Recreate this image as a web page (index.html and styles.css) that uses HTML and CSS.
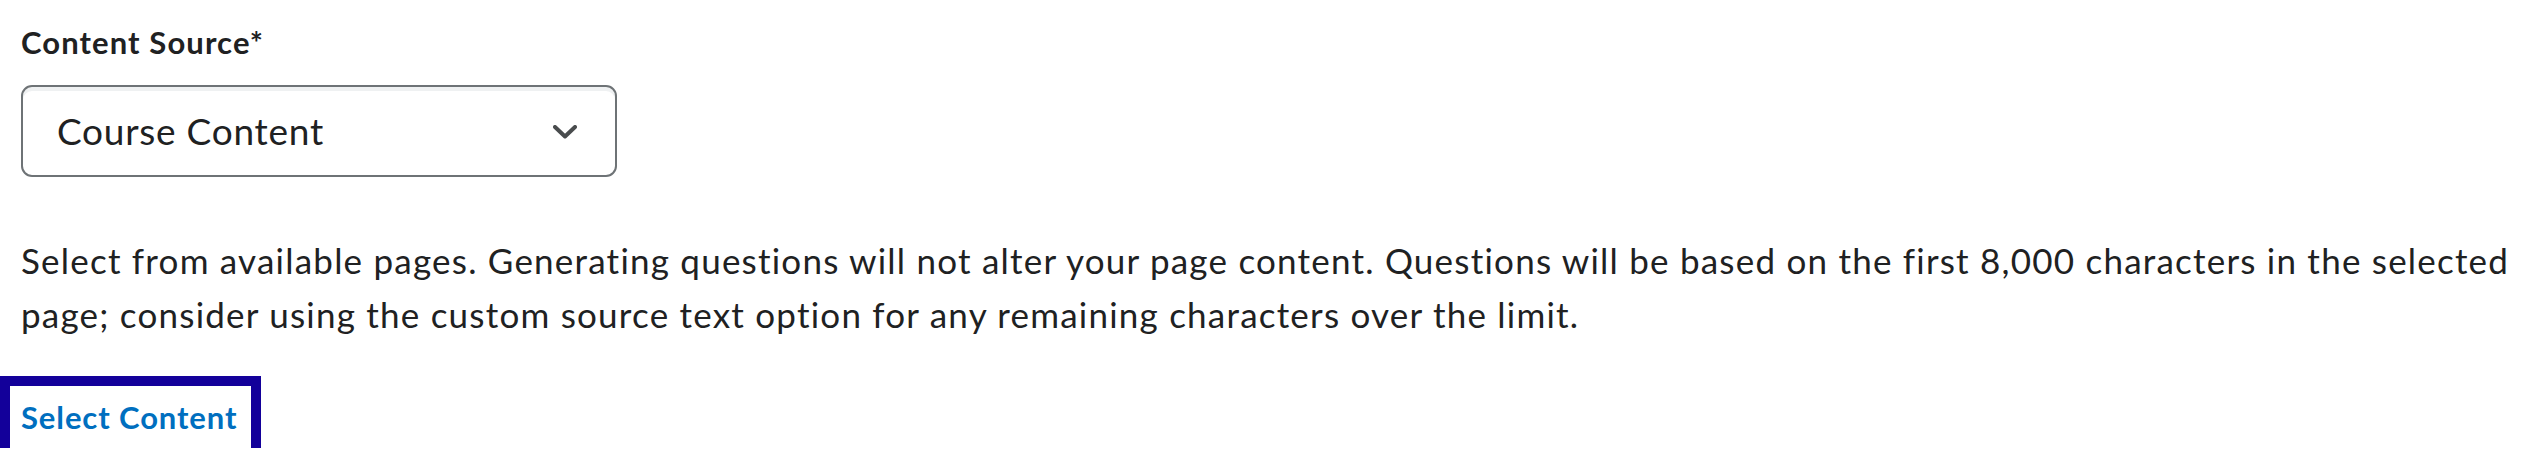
FILE: index.html
```html
<!DOCTYPE html>
<html lang="en">
<head>
<meta charset="utf-8">
<title>Content Source</title>
<link rel="stylesheet" href="styles.css">
</head>
<body>
<div class="page">
  <div class="field">
    <label class="field-label" for="source">Content Source*</label>
    <div class="select" id="source">
      <span class="select-value">Course Content</span>
      <svg class="select-chevron" viewBox="0 0 24 14" width="24" height="14" aria-hidden="true">
        <path d="M2 2 L12 11.5 L22 2" fill="none" stroke="#494c4e" stroke-width="4" stroke-linecap="round" stroke-linejoin="round"/>
      </svg>
    </div>
  </div>
  <p class="help">Select from available pages. Generating questions will not alter your page content. Questions will be based on the first 8,000 characters in the selected page; consider using the custom source text option for any remaining characters over the limit.</p>
  <div class="actions">
    <button class="link-button" type="button">Select Content</button>
  </div>
</div>
</body>
</html>
```

FILE: styles.css
```css
html, body {
  margin: 0;
  padding: 0;
  background: #ffffff;
}

body {
  font-family: Lato, "Noto Sans", sans-serif;
  color: #202122;
}

.page {
  padding: 24px 21px 0 21px;
}

.field {
  display: flex;
  flex-direction: column;
}

.field-label {
  font-weight: 700;
  font-size: 31px;
  line-height: 37px;
  letter-spacing: 1.1px;
  color: #202122;
}

.select {
  margin-top: 24px;
  box-sizing: border-box;
  width: 596px;
  height: 92px;
  border: 2px solid #6e7376;
  border-radius: 11px;
  box-shadow: inset 0 4px 0 0 rgba(177, 185, 190, 0.2);
  display: flex;
  align-items: center;
  justify-content: space-between;
  padding: 0 38px 0 34px;
}

.select-value {
  font-size: 37px;
  line-height: 44px;
  letter-spacing: 0.75px;
  color: #202122;
}

.select-chevron {
  display: block;
  margin-top: 2px;
}

.help {
  margin: 56px 0 0 0;
  font-size: 35px;
  line-height: 54px;
  letter-spacing: 1.22px;
  color: #202122;
}

.actions {
  margin-top: 45px;
  display: flex;
}

.link-button {
  margin-left: -11px;
  box-sizing: border-box;
  height: 62px;
  padding: 0 14px 0 11px;
  border: 0;
  background: #ffffff;
  outline: 10px solid #13009a;
  font-family: Lato, "Noto Sans", sans-serif;
  font-weight: 700;
  font-size: 31px;
  letter-spacing: 0.9px;
  color: #006fbf;
  cursor: pointer;
}
```
